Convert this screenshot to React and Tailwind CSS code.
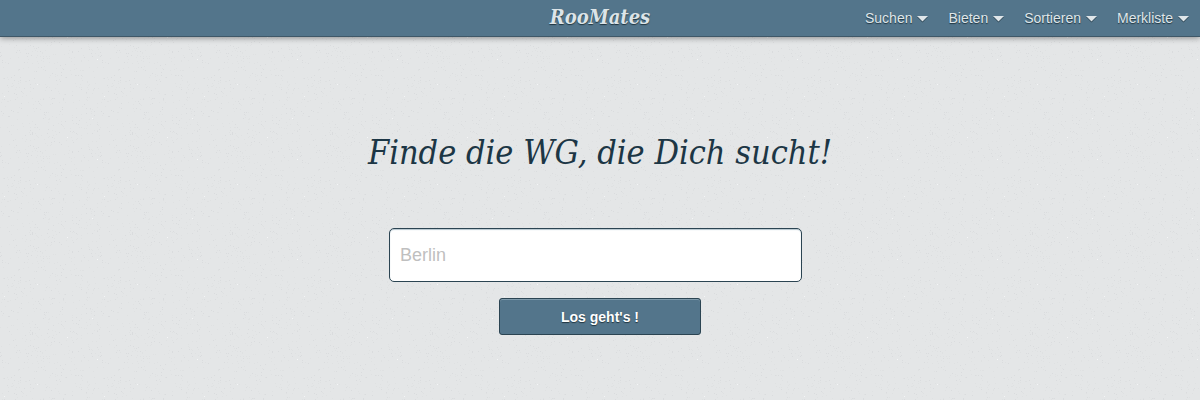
import React from 'react';

const menuItems = ['Suchen', 'Bieten', 'Sortieren', 'Merkliste'];

const noise = (n) => {
    const value = Math.sin(n * 12.9898) * 43758.5453;
    return value - Math.floor(value);
};

// Speckles of one 100x100 paper tile
const speckles = Array.from({ length: 420 }, (_, i) => ({
    x: Math.floor(noise(i + 1) * 100),
    y: Math.floor(noise(i + 1001) * 100),
    fill: i % 84 === 0 ? '#f4f5f6' : i % 3 === 0 ? '#dadcde' : '#dfe1e2',
}));

const PaperTexture = () => (
    <svg className="absolute inset-0 -z-10 h-full w-full" aria-hidden="true">
        <defs>
            <pattern id="paper" width="100" height="100" patternUnits="userSpaceOnUse">
                {speckles.map((dot, i) => (
                    <rect key={i} x={dot.x} y={dot.y} width="1" height="1" fill={dot.fill} />
                ))}
            </pattern>
        </defs>
        <rect width="100%" height="100%" fill="url(#paper)" />
    </svg>
);

const Caret = () => (
    <svg className="h-[7px] w-[11px] drop-shadow-[0_1px_0_#2b4452]" viewBox="0 0 11 7" aria-hidden="true">
        <path d="M0 1h11L5.5 6.5z" fill="#dfe6ea" />
    </svg>
);

const Header = () => (
    <header className="grid h-[37px] grid-cols-[1fr_auto_1fr] items-center border-b border-[#3f5868] bg-[#53758b] shadow-[0_1px_6px_rgba(0,0,0,0.4)]">
        <a
            href="#start"
            className="col-start-2 pb-[2px] font-['DejaVu_Serif_Condensed','DejaVu_Serif',serif] text-[20px] leading-6 font-bold text-[#dce4e8] italic [text-shadow:0_1px_1px_#20343f]"
        >
            RooMates
        </a>
        <nav className="flex justify-end gap-5 pr-[11px]">
            {menuItems.map((item) => (
                <button
                    key={item}
                    type="button"
                    className="flex items-center gap-[5px] text-sm leading-5 text-[#dfe6ea] [text-shadow:0_1px_1px_#20343f]"
                >
                    {item}
                    <Caret />
                </button>
            ))}
        </nav>
    </header>
);

const App = () => {
    return (
        <div className="relative isolate min-h-screen bg-[#e4e6e7] font-['Liberation_Sans',Arial,sans-serif]">
            <PaperTexture />
            <Header />
            <main className="flex flex-col items-center pt-[91px]">
                <h1 className="font-['DejaVu_Serif_Condensed','DejaVu_Serif',serif] text-[34px] leading-[48px] text-[#1c3645] italic">
                    Finde die WG, die Dich sucht!
                </h1>
                <form className="mt-[52px] flex w-[422px] max-w-full flex-col" onSubmit={(e) => e.preventDefault()}>
                    <input
                        type="text"
                        aria-label="Stadt"
                        placeholder="Berlin"
                        className="mr-[9px] h-[54px] rounded-[5px] border border-[#2b4452] bg-white px-[10px] text-lg text-[#1c3645] shadow-[inset_0_1px_1px_#b5c6cf] placeholder:text-[#bfbfbf]"
                    />
                    <button
                        type="submit"
                        className="mt-4 h-[37px] w-[202px] self-center rounded-[3px] border border-[#2b4452] bg-[#53758b] text-sm font-bold text-white shadow-[inset_0_1px_0_#7f9bac] [text-shadow:0_1px_1px_#20343f]"
                    >
                        Los geht's !
                    </button>
                </form>
            </main>
        </div>
    );
};

export default App;
